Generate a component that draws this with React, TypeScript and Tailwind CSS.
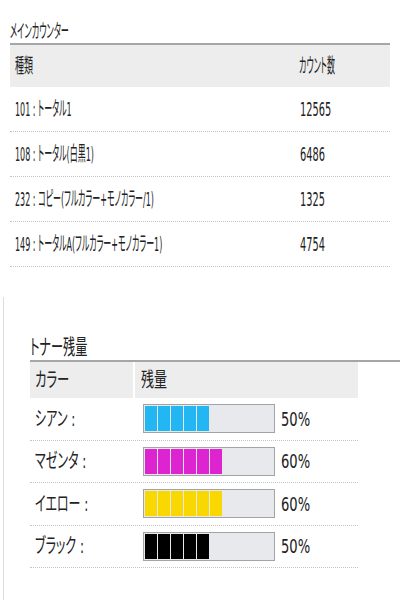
import React from 'react';

const counters = [
  { name: '101 : トータル1', count: '12565' },
  { name: '108 : トータル(白黒1)', count: '6486' },
  { name: '232 : コピー(フルカラー+モノカラー/1)', count: '1325' },
  { name: '149 : トータルA(フルカラー+モノカラー1)', count: '4754' },
];

const toners = [
  { name: 'シアン :', level: 5, pct: '50%', color: 'bg-[#22b6f3]' },
  { name: 'マゼンタ :', level: 6, pct: '60%', color: 'bg-[#de24d0]' },
  { name: 'イエロー :', level: 6, pct: '60%', color: 'bg-[#f8d800]' },
  { name: 'ブラック :', level: 5, pct: '50%', color: 'bg-black' },
];

// the screenshot is squeezed sideways, so text gets a horizontal scale
const Sq: React.FC<{ children: React.ReactNode; className: string }> = ({ children, className }) => (
  <span className={`inline-block whitespace-nowrap origin-left ${className}`}>{children}</span>
);

const Gauge: React.FC<{ level: number; color: string }> = ({ level, color }) => (
  <div className="w-[132px] h-[29px] border border-[#a3a3a3] bg-[#e8e9ec] p-px flex gap-px">
    {Array.from({ length: level }).map((_, i) => (
      <div key={i} className={`w-[12px] h-full ${color}`} />
    ))}
  </div>
);

export default function App() {
  return (
    <div className="w-[400px] h-[600px] bg-white overflow-hidden text-[#222] font-['DejaVu_Sans','Noto_Sans_CJK_JP',sans-serif] [font-feature-settings:'palt']">
      <div className="pt-[20px] px-[10px]">
        <div className="h-[23px] leading-[23px] text-[19px]">
          <Sq className="scale-x-[0.43]">メインカウンター</Sq>
        </div>
        <div className="border-t-2 border-[#a6a6a6]">
          <div className="grid grid-cols-[284px_1fr] h-[42px] items-center bg-[#ededed] text-[20px]">
            <div className="pl-[5px]"><Sq className="scale-x-[0.45]">種類</Sq></div>
            <div className="pl-[5px]"><Sq className="scale-x-[0.4]">カウント数</Sq></div>
          </div>
          {counters.map((c) => (
            <div
              key={c.name}
              className="grid grid-cols-[284px_1fr] h-[45px] items-center border-b border-dotted border-[#c4c4c4] text-[20px]"
            >
              <div className="pl-[5px]"><Sq className="scale-x-[0.4]">{c.name}</Sq></div>
              <div className="pl-[6px]"><Sq className="scale-x-[0.49]">{c.count}</Sq></div>
            </div>
          ))}
        </div>
      </div>

      <div className="mt-[30px] ml-[3px] h-[400px] border-l border-[#dcdcdc] pt-[37px] pl-[26px]">
        <div className="h-[26px] leading-[26px] text-[21px] border-b-2 border-[#a6a6a6] box-content">
          <Sq className="scale-x-[0.58]">トナー残量</Sq>
        </div>
        <div className="w-[328px] text-[20px]">
          <div className="grid grid-cols-[105px_1fr] h-[36px] items-center bg-[#ededed]">
            <div className="pl-[5px] h-full flex items-center border-r-2 border-white">
              <Sq className="scale-x-[0.62]">カラー</Sq>
            </div>
            <div className="pl-[6px]"><Sq className="scale-x-[0.65]">残量</Sq></div>
          </div>
          {toners.map((t) => (
            <div
              key={t.name}
              className="grid grid-cols-[105px_1fr] h-[42.5px] items-center border-b border-dotted border-[#c4c4c4]"
            >
              <div className="pl-[5px]"><Sq className="scale-x-[0.6]">{t.name}</Sq></div>
              <div className="pl-[8px] flex items-center gap-[6px]">
                <Gauge level={t.level} color={t.color} />
                <span className="text-[19px]"><Sq className="scale-x-[0.69]">{t.pct}</Sq></span>
              </div>
            </div>
          ))}
        </div>
      </div>
    </div>
  );
}
